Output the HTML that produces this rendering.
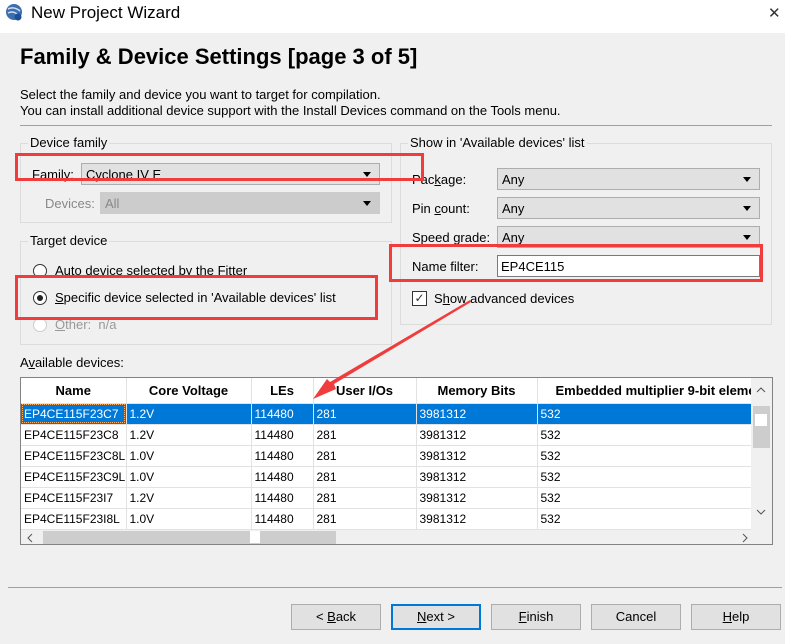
<!DOCTYPE html>
<html><head><meta charset="utf-8"><style>
*{box-sizing:border-box;margin:0;padding:0}
body{width:785px;height:644px;overflow:hidden;background:#f0f0f0;font-family:"Liberation Sans","DejaVu Sans",sans-serif;font-size:13px;color:#000;position:relative}
.a{position:absolute;white-space:nowrap}
.grp{position:absolute;border:1px solid #dcdcdc}
.cb{position:absolute;background:#e1e1e1;border:1px solid #adadad;height:22px;padding:3px 4px;font-size:13px}
.cb:after{content:"";position:absolute;right:8px;top:8px;border-left:4px solid transparent;border-right:4px solid transparent;border-top:5px solid #000}
.rb{position:absolute;width:14px;height:14px;border-radius:50%;border:1px solid #333;background:#fff}
.red{position:absolute;border:3px solid #f03c3c}
table{border-collapse:collapse;font-size:12px;table-layout:fixed}
td{height:21px;border-right:1px solid #e2e2e2;border-bottom:1px solid #e2e2e2;padding:0 3px;white-space:nowrap;overflow:hidden}
th{height:25px;font-weight:bold;font-size:13px;border-right:1px solid #e2e2e2;border-bottom:1px solid #e2e2e2;white-space:nowrap;overflow:hidden}
tr.sel td{background:#0078d7;color:#fff}
.btn{position:absolute;top:604px;width:90px;height:26px;background:#e1e1e1;border:1px solid #adadad;text-align:center;line-height:24px;font-size:13px}
u{text-decoration:underline}
</style></head><body>
<div class="a" style="left:0;top:0;width:785px;height:33px;background:#fff"></div>
<svg class="a" style="left:5px;top:3px" width="18" height="18" viewBox="0 0 18 18"><circle cx="9" cy="9" r="8" fill="#3b6fb0"/><path d="M3 6q6-3 12 2M3 10q6-3 11 3" stroke="#cfe0f4" stroke-width="1.5" fill="none"/><circle cx="13" cy="14" r="3.5" fill="#1e4f96"/></svg>
<div class="a" style="left:31px;top:3px;font-size:17px">New Project Wizard</div>
<div class="a" style="left:768px;top:4px;font-size:15px;color:#333">✕</div>
<div class="a" style="left:20px;top:44px;font-size:22px;font-weight:bold">Family &amp; Device Settings [page 3 of 5]</div>
<div class="a" style="left:20px;top:87px">Select the family and device you want to target for compilation.</div>
<div class="a" style="left:20px;top:103px">You can install additional device support with the Install Devices command on the Tools menu.</div>
<div class="a" style="left:20px;top:125px;width:752px;height:1px;background:#a0a0a0"></div>

<div class="grp" style="left:20px;top:143px;width:372px;height:80px"></div>
<div class="a" style="left:28px;top:135px;background:#f0f0f0;padding:0 2px">Device family</div>
<div class="a" style="left:32px;top:167px">Family:</div>
<div class="cb" style="left:81px;top:163px;width:299px">Cyclone IV E</div>
<div class="a" style="left:45px;top:196px;color:#888">Devices:</div>
<div class="cb" style="left:100px;top:192px;width:280px;background:#ccc;border-color:#ccc;color:#888">All</div>

<div class="grp" style="left:20px;top:241px;width:372px;height:104px"></div>
<div class="a" style="left:28px;top:233px;background:#f0f0f0;padding:0 2px">Target device</div>
<div class="rb" style="left:33px;top:264px"></div>
<div class="a" style="left:55px;top:263px">Auto device selected by the Fitter</div>
<div class="rb" style="left:33px;top:291px"><div style="position:absolute;left:3px;top:3px;width:6px;height:6px;border-radius:50%;background:#222"></div></div>
<div class="a" style="left:55px;top:290px"><u>S</u>pecific device selected in 'Available devices' list</div>
<div class="rb" style="left:33px;top:318px;border-color:#ccc"></div>
<div class="a" style="left:55px;top:317px;color:#999"><u>O</u>ther:&nbsp; n/a</div>

<div class="grp" style="left:400px;top:143px;width:372px;height:182px"></div>
<div class="a" style="left:408px;top:135px;background:#f0f0f0;padding:0 2px">Show in 'Available devices' list</div>
<div class="a" style="left:412px;top:172px">Pac<u>k</u>age:</div>
<div class="cb" style="left:497px;top:168px;width:263px">Any</div>
<div class="a" style="left:412px;top:201px">Pin <u>c</u>ount:</div>
<div class="cb" style="left:497px;top:197px;width:263px">Any</div>
<div class="a" style="left:412px;top:230px">Speed grade:</div>
<div class="cb" style="left:497px;top:226px;width:263px">Any</div>
<div class="a" style="left:412px;top:259px">Name filter:</div>
<div class="a" style="left:497px;top:255px;width:263px;height:22px;background:#fff;border:1px solid #7a7a7a;padding:3px 3px">EP4CE115</div>
<div class="a" style="left:412px;top:291px;width:15px;height:15px;border:1px solid #333;background:#fff;font-size:12px;line-height:13px;text-align:center;color:#333">✓</div>
<div class="a" style="left:434px;top:291px">S<u>h</u>ow advanced devices</div>

<div class="a" style="left:20px;top:355px">A<u>v</u>ailable devices:</div>
<div class="a" style="left:20px;top:377px;width:753px;height:168px;border:1px solid #828282;background:#fff;overflow:hidden">
<table style="width:730px">
<colgroup><col style="width:105px"><col style="width:125px"><col style="width:62px"><col style="width:103px"><col style="width:121px"><col style="width:214px"></colgroup>
<tr><th>Name</th><th>Core Voltage</th><th>LEs</th><th>User I/Os</th><th>Memory Bits</th><th style="text-align:left;padding-left:18px">Embedded multiplier 9-bit eleme</th></tr>
<tr class="sel"><td style="outline:1px dotted #ffb060;outline-offset:-2px">EP4CE115F23C7</td><td>1.2V</td><td>114480</td><td>281</td><td>3981312</td><td>532</td></tr>
<tr><td>EP4CE115F23C8</td><td>1.2V</td><td>114480</td><td>281</td><td>3981312</td><td>532</td></tr>
<tr><td>EP4CE115F23C8L</td><td>1.0V</td><td>114480</td><td>281</td><td>3981312</td><td>532</td></tr>
<tr><td>EP4CE115F23C9L</td><td>1.0V</td><td>114480</td><td>281</td><td>3981312</td><td>532</td></tr>
<tr><td>EP4CE115F23I7</td><td>1.2V</td><td>114480</td><td>281</td><td>3981312</td><td>532</td></tr>
<tr><td>EP4CE115F23I8L</td><td>1.0V</td><td>114480</td><td>281</td><td>3981312</td><td>532</td></tr>
</table>
<div class="a" style="left:730px;top:0;width:21px;height:152px;background:#f0f0f0"></div>
<svg class="a" style="left:734px;top:8px" width="12" height="8"><path d="M2 6l4-4 4 4" stroke="#555" fill="none"/></svg>
<div class="a" style="left:732px;top:28px;width:17px;height:42px;background:#cdcdcd"></div>
<div class="a" style="left:734px;top:36px;width:12px;height:12px;background:#fff"></div>
<svg class="a" style="left:734px;top:130px" width="12" height="8"><path d="M2 2l4 4 4-4" stroke="#555" fill="none"/></svg>
<div class="a" style="left:0;top:152px;width:751px;height:15px;background:#f0f0f0"></div>
<svg class="a" style="left:5px;top:155px" width="8" height="10"><path d="M6 1l-4 4 4 4" stroke="#555" fill="none"/></svg>
<div class="a" style="left:22px;top:153px;width:293px;height:13px;background:#cdcdcd"></div>
<div class="a" style="left:229px;top:153px;width:10px;height:12px;background:#fff"></div>
<svg class="a" style="left:720px;top:155px" width="8" height="10"><path d="M2 1l4 4-4 4" stroke="#555" fill="none"/></svg>
</div>

<div class="a" style="left:8px;top:587px;width:774px;height:1px;background:#a0a0a0"></div>
<div class="btn" style="left:291px">&lt; <u>B</u>ack</div>
<div class="btn" style="left:391px;border:2px solid #0078d7;line-height:22px"><u>N</u>ext &gt;</div>
<div class="btn" style="left:491px"><u>F</u>inish</div>
<div class="btn" style="left:591px">Cancel</div>
<div class="btn" style="left:691px"><u>H</u>elp</div>

<div class="red" style="left:15px;top:153px;width:409px;height:28px"></div>
<div class="red" style="left:15px;top:275px;width:363px;height:45px"></div>
<div class="red" style="left:389px;top:244px;width:374px;height:38px"></div>
<svg class="a" style="left:0;top:0" width="785" height="644"><polygon points="470,300 471,302 334,384 336,389 313,399 327,379 330,382" fill="#f03c3c"/></svg>
</body></html>
